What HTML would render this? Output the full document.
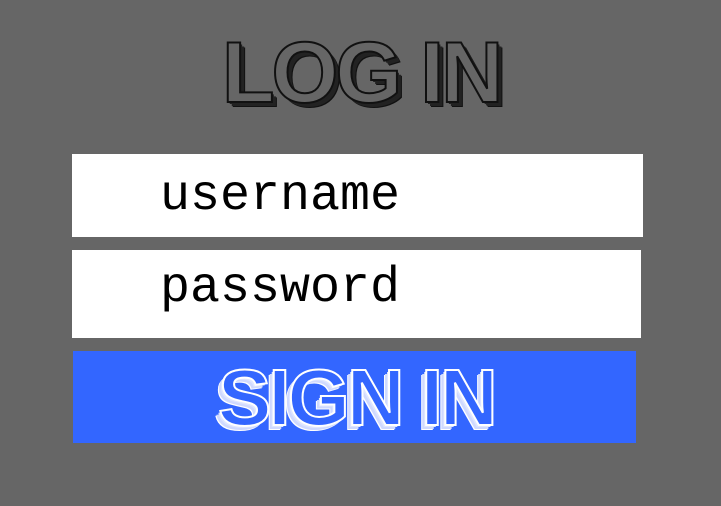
<!DOCTYPE html>
<html><head><style>
html,body{margin:0;padding:0;width:721px;height:506px;background:#666;overflow:hidden;position:relative;font-family:"Liberation Sans",sans-serif}
.t{position:absolute;white-space:nowrap;font-weight:bold;letter-spacing:-2px}
#title{left:222px;top:24px;font-size:86px;letter-spacing:-3px;color:#666;-webkit-text-stroke:2px #111;text-shadow:2px 2px 0 #222,4px 4px 0 #222,5px 5px 0 #111}
.box{position:absolute;background:#fff}
.lbl{position:absolute;font-family:"Liberation Mono",monospace;font-size:50px;color:#000;line-height:1}
#btn{position:absolute;left:73px;top:351px;width:563px;height:92px;background:#3366ff}
#sign{left:218px;top:352px;font-size:80px;letter-spacing:-3px;color:#3366ff;-webkit-text-stroke:2px #fff;text-shadow:-2px 2px 0 #dfe6ff,-4px 4px 0 #cfd9ff,-5px 5px 0 #fff}
</style></head><body>
<div class="t" id="title">LOG IN</div>
<div class="box" style="left:72px;top:154px;width:571px;height:83px"></div>
<div class="box" style="left:72px;top:250px;width:569px;height:88px"></div>
<div class="lbl" style="left:160px;top:172px">username</div>
<div class="lbl" style="left:160px;top:264px">password</div>
<div id="btn"></div>
<div class="t" id="sign">SIGN IN</div>
</body></html>
